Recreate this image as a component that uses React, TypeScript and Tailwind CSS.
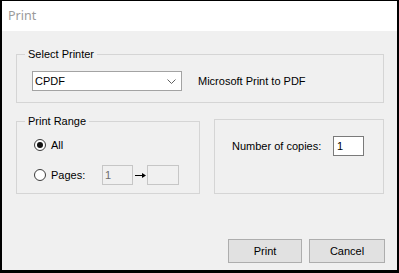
import React from "react";

function Radio({ checked }: { checked?: boolean }) {
  return (
    <div className="w-[12px] h-[12px] rounded-full border border-[#3c3c3c] bg-white flex items-center justify-center shrink-0">
      {checked && <div className="w-[6px] h-[6px] rounded-full bg-[#111111]" />}
    </div>
  );
}

export default function App() {
  return (
    <div
      className="w-[399px] h-[273px] bg-black pt-[1px] pl-[2px] pr-[3px] pb-[3px] flex"
      style={{ fontFamily: '"Liberation Sans", Arial, sans-serif' }}
    >
      <div className="flex-1 flex flex-col">
        <div
          className="h-[30px] bg-white flex items-center pl-[6px] text-[12.5px] text-[#9a9a9a]"
          style={{ fontFamily: '"Noto Sans", "Open Sans", sans-serif' }}
        >
          Print
        </div>
        <div className="flex-1 bg-[#f0f0f0] pl-[14px] pr-[13px] pt-[23px] flex flex-col text-[11px] text-black">
          {/* Select Printer */}
          <div className="relative h-[49px] border border-[#d5d5d5] pl-[15px] pt-[16px] flex items-start">
            <span className="absolute left-[8px] top-[-7px] px-[3px] bg-[#f0f0f0] leading-[13px]">
              Select Printer
            </span>
            <div className="w-[150px] h-[20px] border border-[#a3a3a3] bg-white flex items-center pl-[2px] pr-[5px] justify-between">
              <span className="leading-[13px]">CPDF</span>
              <svg width="9" height="5" viewBox="0 0 9 5">
                <polyline points="0.5,0.5 4.5,4.5 8.5,0.5" fill="none" stroke="#606060" strokeWidth="1" />
              </svg>
            </div>
            <span className="ml-[16px] h-[20px] flex items-center">Microsoft Print to PDF</span>
          </div>

          {/* Row 2 */}
          <div className="flex items-end gap-[14px] mt-[16px]">
            <div className="relative w-[184px] h-[73px] border border-[#d5d5d5] pl-[17px] pt-[17px] flex flex-col">
              <span className="absolute left-[8px] top-[-7px] px-[3px] bg-[#f0f0f0] leading-[13px]">
                Print Range
              </span>
              <div className="flex items-center h-[12px] gap-[5px]">
                <Radio checked />
                <span className="leading-[13px]">All</span>
              </div>
              <div className="flex items-center h-[20px] mt-[14px]">
                <Radio />
                <span className="ml-[5px] w-[51px] leading-[13px]">Pages:</span>
                <div className="w-[31px] h-[20px] border border-[#c6c6c6] bg-[#f0f0f0] pl-[2px] flex items-center text-[#6d6d6d]">
                  1
                </div>
                <svg width="14" height="7" viewBox="0 0 14 7">
                  <line x1="2" y1="3.5" x2="11" y2="3.5" stroke="#000" strokeWidth="1" />
                  <polygon points="9,1 13,3.5 9,6" fill="#000" />
                </svg>
                <div className="w-[32px] h-[20px] border border-[#c6c6c6] bg-[#f0f0f0]" />
              </div>
            </div>

            <div className="w-[170px] h-[75px] border border-[#d5d5d5] pl-[17px] pt-[16px] flex items-start">
              <div className="flex items-center h-[20px]">
                <span className="w-[101px]">Number of copies:</span>
                <div className="w-[31px] h-[20px] border border-[#7a7a7a] bg-white pl-[3px] flex items-center">
                  1
                </div>
              </div>
            </div>
          </div>

          {/* Buttons */}
          <div className="flex justify-end gap-[7px] mt-[45px] mr-[-1px]">
            <button className="w-[74px] h-[24px] border border-[#adadad] bg-[#e1e1e1] text-[11px]">
              Print
            </button>
            <button className="w-[76px] h-[24px] border border-[#adadad] bg-[#e1e1e1] text-[11px]">
              Cancel
            </button>
          </div>
        </div>
      </div>
    </div>
  );
}
